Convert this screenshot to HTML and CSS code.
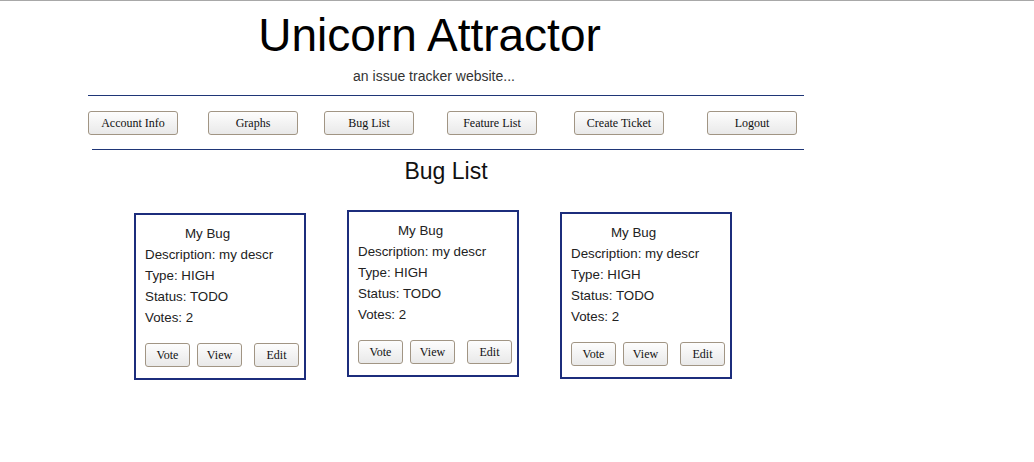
FILE: index.html
```html
<!DOCTYPE html>
<html lang="en">
<head>
<meta charset="utf-8">
<title>Unicorn Attractor</title>
<link rel="stylesheet" href="styles.css">
</head>
<body>
<header class="site-header">
  <h1 class="site-title">Unicorn Attractor</h1>
  <p class="site-tagline">an issue tracker website...</p>
</header>
<div class="rule rule-top"></div>
<nav class="main-nav">
  <button class="btn nav-btn">Account Info</button>
  <button class="btn nav-btn">Graphs</button>
  <button class="btn nav-btn">Bug List</button>
  <button class="btn nav-btn">Feature List</button>
  <button class="btn nav-btn">Create Ticket</button>
  <button class="btn nav-btn">Logout</button>
</nav>
<div class="rule rule-bottom"></div>
<h2 class="page-title">Bug List</h2>
<main class="card-row">
  <section class="card card-a">
    <div class="card-title">My Bug</div>
    <div class="card-line">Description: my descr</div>
    <div class="card-line">Type: HIGH</div>
    <div class="card-line">Status: TODO</div>
    <div class="card-line">Votes: 2</div>
    <div class="card-actions">
      <button class="btn card-btn">Vote</button>
      <button class="btn card-btn">View</button>
      <button class="btn card-btn card-btn-edit">Edit</button>
    </div>
  </section>
  <section class="card card-b">
    <div class="card-title">My Bug</div>
    <div class="card-line">Description: my descr</div>
    <div class="card-line">Type: HIGH</div>
    <div class="card-line">Status: TODO</div>
    <div class="card-line">Votes: 2</div>
    <div class="card-actions">
      <button class="btn card-btn">Vote</button>
      <button class="btn card-btn">View</button>
      <button class="btn card-btn card-btn-edit">Edit</button>
    </div>
  </section>
  <section class="card card-c">
    <div class="card-title">My Bug</div>
    <div class="card-line">Description: my descr</div>
    <div class="card-line">Type: HIGH</div>
    <div class="card-line">Status: TODO</div>
    <div class="card-line">Votes: 2</div>
    <div class="card-actions">
      <button class="btn card-btn">Vote</button>
      <button class="btn card-btn">View</button>
      <button class="btn card-btn card-btn-edit">Edit</button>
    </div>
  </section>
</main>
</body>
</html>
```
FILE: styles.css
```css
html, body {
  margin: 0;
  padding: 0;
  background: #ffffff;
}

body {
  border-top: 1px solid #a8a8a8;
  font-family: "Liberation Sans", Arial, sans-serif;
  color: #222;
}

.site-header {
  width: 859px;
  text-align: center;
}

.site-title {
  margin: 0;
  padding-top: 11px;
  font-size: 46px;
  line-height: 46px;
  font-weight: normal;
  color: #000;
}

.site-tagline {
  margin: 10px 0 0 0;
  padding-left: 9px;
  font-size: 14px;
  line-height: 16px;
  color: #333;
}

.rule {
  border-top: 1px solid #1f3677;
  height: 0;
}

.rule-top {
  margin: 11px 0 0 88px;
  width: 716px;
}

.rule-bottom {
  margin: 14px 0 0 92px;
  width: 712px;
}

.main-nav {
  display: flex;
  margin: 15px 0 0 88px;
}

.btn {
  box-sizing: border-box;
  height: 24px;
  padding: 0;
  border: 1px solid #a19584;
  border-radius: 3px;
  background: linear-gradient(#fdfdfd, #e9e9e9);
  font-family: "Liberation Serif", "Times New Roman", serif;
  font-size: 12px;
  color: #111;
}

.nav-btn {
  width: 90px;
}

.nav-btn:nth-child(2) { margin-left: 30px; }
.nav-btn:nth-child(3) { margin-left: 26px; }
.nav-btn:nth-child(4) { margin-left: 33px; }
.nav-btn:nth-child(5) { margin-left: 37px; }
.nav-btn:nth-child(6) { margin-left: 43px; }

.page-title {
  margin: 8px 0 0 88px;
  width: 716px;
  text-align: center;
  font-size: 23px;
  line-height: 26px;
  font-weight: normal;
  color: #111;
}

.card-row {
  display: flex;
  align-items: flex-start;
  gap: 41px;
  margin: 26px 0 0 134px;
}

.card {
  box-sizing: border-box;
  width: 172px;
  border: 2px solid #1c2d7c;
  padding: 8px 5px 11px 9px;
  font-size: 13.33px;
  line-height: 21px;
  color: #222;
}

.card-a { margin-top: 3px; }
.card-b { margin-top: 0; }
.card-c { margin-top: 2px; }

.card-title {
  padding-left: 40px;
}

.card-actions {
  display: flex;
  gap: 7px;
  margin-top: 15px;
}

.card-btn {
  width: 45px;
}

.card-btn-edit {
  margin-left: 5px;
}
```
